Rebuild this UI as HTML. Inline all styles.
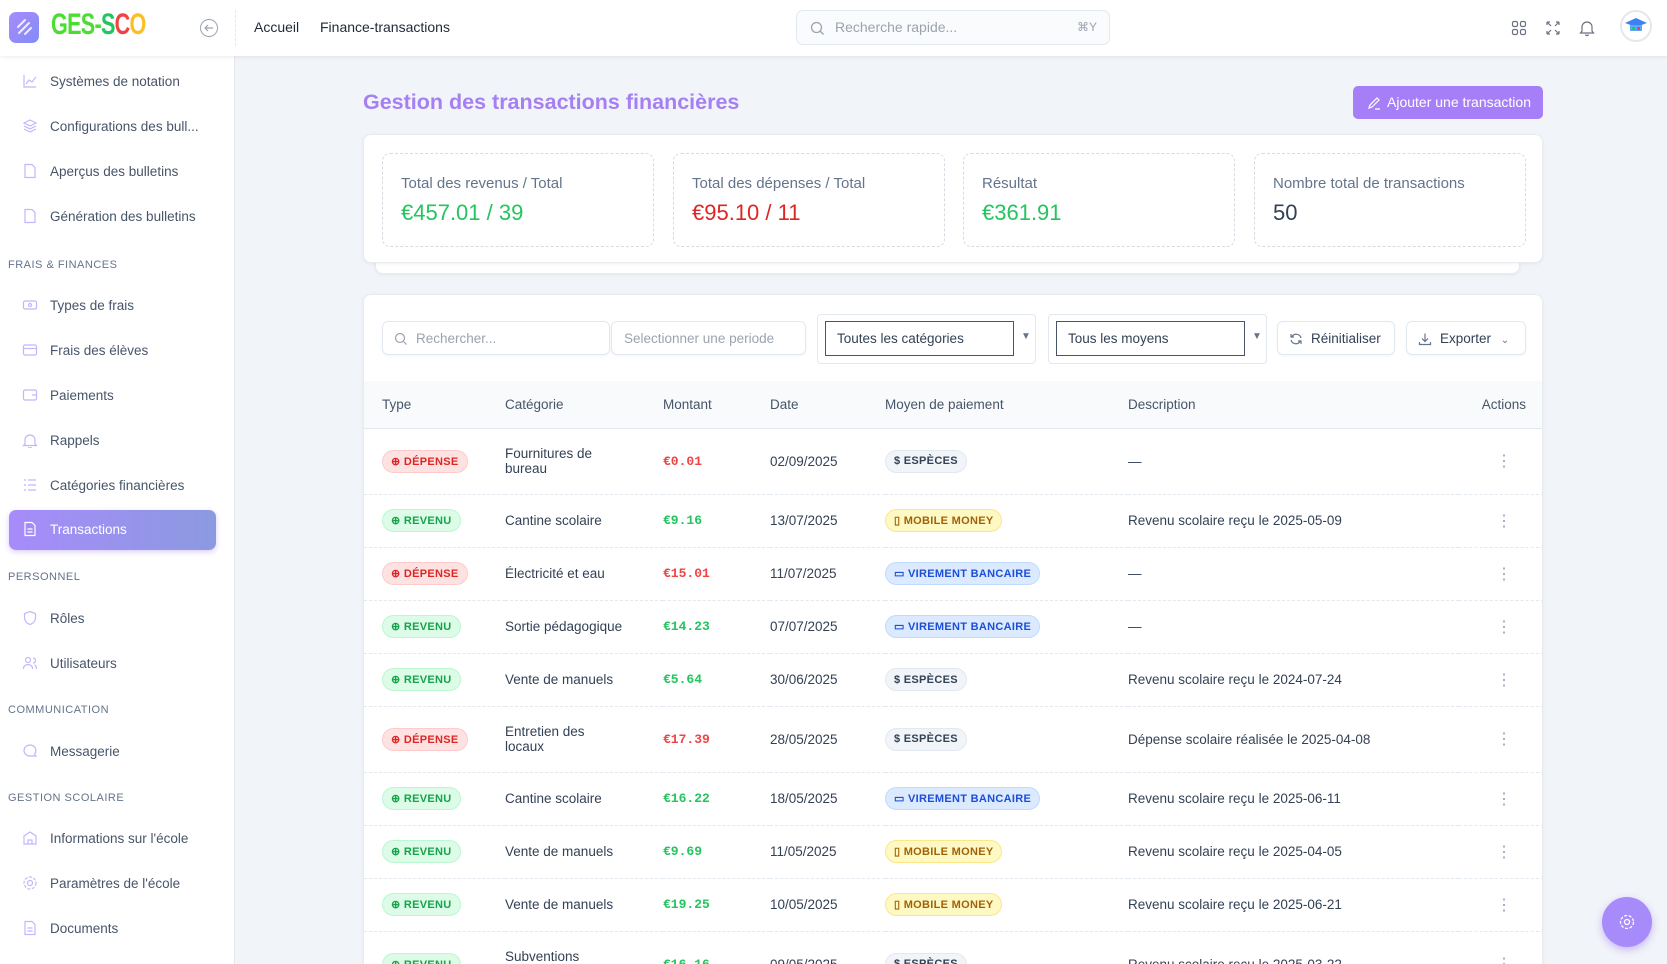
<!DOCTYPE html>
<html><head><meta charset="utf-8"><style>
*{box-sizing:border-box;margin:0;padding:0}
html{width:1667px;height:964px;overflow:hidden}
body{width:1667px;height:964px;overflow:hidden;background:#f1f4f8;font-family:"Liberation Sans",sans-serif;color:#334155;position:relative;font-size:14px}
.abs{position:absolute}
#hdr{left:0;top:0;width:1667px;height:56px;background:#fff;box-shadow:0 1px 4px rgba(0,0,0,.08);z-index:5}
#side{left:0;top:56px;width:235px;height:908px;background:#fff;border-right:1px solid #e5e7eb}
.it{position:absolute;left:0;width:235px;height:20px;font-size:13.5px;color:#475569}
.it svg{position:absolute;left:22px;top:1px}
.it span{position:absolute;left:50px;top:2px}
.sec{position:absolute;left:8px;font-size:11px;letter-spacing:.5px;color:#64748b}
.card{background:#fff;border-radius:8px;box-shadow:0 1px 3px rgba(0,0,0,.06);border:1px solid #e8ecf1}
.stat{position:absolute;top:18px;height:94px;width:272px;border:1px dashed #d6dbe3;border-radius:8px}
.stat .l{position:absolute;left:18px;top:21px;font-size:15px;color:#64748b}
.stat .v{position:absolute;left:18px;top:46px;font-size:22px}
.inp{position:absolute;height:34px;border:1px solid #e2e8f0;border-radius:6px;background:#fff;font-size:13.5px;color:#9ca3af;padding:9px 12px;box-shadow:0 1px 2px rgba(0,0,0,.04)}
table{border-collapse:collapse;position:absolute;left:0;top:86px;width:1180px}
th{height:47px;background:#f8fafc;text-align:left;font-weight:normal;color:#475569;font-size:13.5px;border-bottom:1px solid #e2e8f0}
td{font-size:13.5px;color:#334155;border-bottom:1px dashed #e2e8f0}
tr.s td{height:53px} tr.d td{height:66px}
.b{display:inline-flex;align-items:center;gap:4px;height:23px;padding:0 8px;border-radius:12px;font-size:11px;font-weight:bold;letter-spacing:.3px}
.dep{background:#fee2e2;color:#dc2626;border:1px solid #fecaca}
.rev{background:#dcfce7;color:#16a34a;border:1px solid #bbf7d0}
.esp{background:#f1f5f9;color:#334155;border:1px solid #e2e8f0}
.mob{background:#fef9c3;color:#a16207;border:1px solid #fde68a}
.vir{background:#dbeafe;color:#1d4ed8;border:1px solid #bfdbfe}
.mr{font-family:"Liberation Mono",monospace;font-weight:bold;font-size:13px;color:#ef4444}
.mg{font-family:"Liberation Mono",monospace;font-weight:bold;font-size:13px;color:#22c55e}
.dots{color:#94a3b8;text-align:right;padding-right:32px;font-size:16px}
</style></head><body>
<div id="hdr" class="abs">
 <div class="abs" style="left:9px;top:12px;width:30px;height:31px;border-radius:7px;background:linear-gradient(135deg,#a78bfa,#818cf8)">
  <svg width="30" height="31"><path d="M9 15l7-7M10 21l10-10M16 22l6-6" stroke="#fff" stroke-width="2" stroke-linecap="round" opacity=".85"/></svg></div>
 <div class="abs" style="left:51px;top:8px;font-size:30px;font-weight:bold;letter-spacing:-1px;transform:scaleX(.72);transform-origin:left;font-family:'Liberation Sans Narrow','Liberation Sans',sans-serif"><span style="color:#4ade30">GES-</span><span style="color:#22c55e">S</span><span style="color:#ef4444">C</span><span style="color:#fbbf24">O</span></div>
 <svg class="abs" style="left:199px;top:18px" width="20" height="20"><circle cx="10" cy="10" r="8.5" fill="none" stroke="#9ca3af"/><path d="M14 10H6M9 7l-3 3 3 3" fill="none" stroke="#9ca3af" stroke-width="1.2"/></svg>
 <div class="abs" style="left:235px;top:10px;height:36px;border-left:1px dashed #e5e7eb"></div>
 <div class="abs" style="left:254px;top:19px;font-size:14px;color:#1f2937">Accueil</div>
 <div class="abs" style="left:320px;top:19px;font-size:14px;color:#1f2937">Finance-transactions</div>
 <div class="abs" style="left:796px;top:10px;width:314px;height:35px;border:1px solid #e2e8f0;border-radius:7px;background:#fafbfc">
  <svg class="abs" style="left:13px;top:10px" width="15" height="15"><circle cx="6.5" cy="6.5" r="5" fill="none" stroke="#9ca3af" stroke-width="1.3"/><path d="M10 10l3.5 3.5" stroke="#9ca3af" stroke-width="1.3"/></svg>
  <span class="abs" style="left:38px;top:8px;color:#9ca3af;font-size:14px">Recherche rapide...</span>
  <span class="abs" style="right:12px;top:9px;color:#9ca3af;font-size:12px">⌘Y</span></div>
 <svg class="abs" style="left:1511px;top:20px" width="16" height="16" fill="none" stroke="#6b7280" stroke-width="1.2"><rect x="1.5" y="1.5" width="5" height="5" rx="1.5"/><rect x="9.5" y="1.5" width="5" height="5" rx="1.5"/><rect x="1.5" y="9.5" width="5" height="5" rx="1.5"/><rect x="9.5" y="9.5" width="5" height="5" rx="1.5"/></svg>
 <svg class="abs" style="left:1545px;top:20px" width="16" height="16" fill="none" stroke="#6b7280" stroke-width="1.2"><path d="M2 2l4 4M2 2h3M2 2v3M14 2l-4 4M14 2h-3M14 2v3M2 14l4-4M2 14h3M2 14v-3M14 14l-4-4M14 14h-3M14 14v-3"/></svg>
 <svg class="abs" style="left:1579px;top:19px" width="16" height="18" fill="none" stroke="#6b7280" stroke-width="1.2"><path d="M3 12V8a5 5 0 0110 0v4l1.5 2h-13zM6.5 15.5a1.6 1.6 0 003 0"/></svg>
 <div class="abs" style="left:1620px;top:10px;width:32px;height:32px;border-radius:50%;border:2px solid #e5e7eb;background:#fff">
  <svg width="28" height="28"><path d="M3 11l11-5 11 5-11 4z" fill="#3b82f6"/><rect x="8" y="13" width="12" height="6" fill="#60a5fa"/><rect x="10" y="15" width="3" height="3" fill="#22c55e"/><rect x="15" y="15" width="3" height="3" fill="#ef4444"/></svg></div>
</div>

<div id="side" class="abs">
 <div class="it" style="top:16px"><svg width="16" height="16" fill="none" stroke="#c4b5fd" stroke-width="1.2"><path d="M2 2v12h12M4 11l3-4 3 2 4-5"/></svg><span>Systèmes de notation</span></div>
 <div class="it" style="top:61px"><svg width="16" height="16" fill="none" stroke="#c4b5fd" stroke-width="1.2"><path d="M8 2l6 3-6 3-6-3zM2 8l6 3 6-3M2 11l6 3 6-3"/></svg><span>Configurations des bull...</span></div>
 <div class="it" style="top:106px"><svg width="16" height="16" fill="none" stroke="#c4b5fd" stroke-width="1.2"><path d="M3 1.5h7l3 3v10H3z"/></svg><span>Aperçus des bulletins</span></div>
 <div class="it" style="top:151px"><svg width="16" height="16" fill="none" stroke="#c4b5fd" stroke-width="1.2"><path d="M3 1.5h7l3 3v10H3z"/></svg><span>Génération des bulletins</span></div>
 <div class="sec" style="top:203px">FRAIS &amp; FINANCES</div>
 <div class="it" style="top:240px"><svg width="16" height="16" fill="none" stroke="#c4b5fd" stroke-width="1.2"><rect x="1.5" y="4" width="13" height="8" rx="1.5"/><circle cx="8" cy="8" r="1.5"/></svg><span>Types de frais</span></div>
 <div class="it" style="top:285px"><svg width="16" height="16" fill="none" stroke="#c4b5fd" stroke-width="1.2"><rect x="1.5" y="3" width="13" height="10" rx="1.5"/><path d="M1.5 6.5h13"/></svg><span>Frais des élèves</span></div>
 <div class="it" style="top:330px"><svg width="16" height="16" fill="none" stroke="#c4b5fd" stroke-width="1.2"><rect x="1.5" y="3" width="13" height="10" rx="1.5"/><path d="M10 8h4"/></svg><span>Paiements</span></div>
 <div class="it" style="top:375px"><svg width="16" height="16" fill="none" stroke="#c4b5fd" stroke-width="1.2"><path d="M3 12V8a5 5 0 0110 0v4l1.5 1.5h-13zM6.5 15a1.6 1.6 0 003 0"/></svg><span>Rappels</span></div>
 <div class="it" style="top:420px"><svg width="16" height="16" fill="none" stroke="#c4b5fd" stroke-width="1.2"><path d="M2 3h2M6 3h8M2 8h2M6 8h8M2 13h2M6 13h8"/></svg><span>Catégories financières</span></div>
 <div class="abs" style="left:9px;top:454px;width:207px;height:40px;border-radius:7px;background:linear-gradient(90deg,#a78bfa,#8b9ae0);box-shadow:0 2px 6px rgba(139,92,246,.3)"></div>
 <div class="it" style="top:464px;color:#fff"><svg width="16" height="16" fill="none" stroke="#fff" stroke-width="1.2"><path d="M3 1.5h7l3 3v10H3zM5.5 8h5M5.5 11h5"/></svg><span>Transactions</span></div>
 <div class="sec" style="top:515px">PERSONNEL</div>
 <div class="it" style="top:553px"><svg width="16" height="16" fill="none" stroke="#c4b5fd" stroke-width="1.2"><path d="M8 1.5l5.5 2v4c0 3.5-2.5 6-5.5 7-3-1-5.5-3.5-5.5-7v-4z"/></svg><span>Rôles</span></div>
 <div class="it" style="top:598px"><svg width="16" height="16" fill="none" stroke="#c4b5fd" stroke-width="1.2"><circle cx="6" cy="5" r="2.5"/><path d="M1.5 14c0-3 2-4.5 4.5-4.5s4.5 1.5 4.5 4.5M11 3a2.5 2.5 0 010 5M12.5 10c1.5.5 2 2 2 4"/></svg><span>Utilisateurs</span></div>
 <div class="sec" style="top:648px">COMMUNICATION</div>
 <div class="it" style="top:686px"><svg width="16" height="16" fill="none" stroke="#c4b5fd" stroke-width="1.2"><path d="M8 2a6 5.5 0 100 11H14l-1.5-2A6 5.5 0 008 2z"/></svg><span>Messagerie</span></div>
 <div class="sec" style="top:736px">GESTION SCOLAIRE</div>
 <div class="it" style="top:773px"><svg width="16" height="16" fill="none" stroke="#c4b5fd" stroke-width="1.2"><path d="M2 14V6l6-4 6 4v8zM6 14v-4h4v4"/></svg><span>Informations sur l'école</span></div>
 <div class="it" style="top:818px"><svg width="16" height="16" fill="none" stroke="#c4b5fd" stroke-width="1.2"><circle cx="8" cy="8" r="2.5"/><circle cx="8" cy="8" r="6" stroke-dasharray="3 1.5"/></svg><span>Paramètres de l'école</span></div>
 <div class="it" style="top:863px"><svg width="16" height="16" fill="none" stroke="#c4b5fd" stroke-width="1.2"><path d="M3 1.5h7l3 3v10H3zM5.5 8h5M5.5 11h5"/></svg><span>Documents</span></div>
</div>

<div class="abs" style="left:363px;top:90px;font-size:21.5px;font-weight:bold;color:#a67ff2">Gestion des transactions financières</div>
<div class="abs" style="left:1353px;top:86px;width:190px;height:33px;border-radius:5px;background:#a67ff8;color:#fff;font-size:14px">
 <svg class="abs" style="left:14px;top:10px" width="14" height="14" fill="none" stroke="#fff" stroke-width="1.2"><path d="M2 12l1-3 7-7 2 2-7 7zM8 13h5"/></svg>
 <span class="abs" style="left:34px;top:8px">Ajouter une transaction</span></div>

<div class="abs card" style="left:375px;top:250px;width:1145px;height:24px"></div>
<div class="abs card" style="left:363px;top:134px;width:1180px;height:129px">
 <div class="stat" style="left:18px"><div class="l">Total des revenus / Total</div><div class="v" style="color:#22c55e">€457.01 / 39</div></div>
 <div class="stat" style="left:309px"><div class="l">Total des dépenses / Total</div><div class="v" style="color:#dc2626">€95.10 / 11</div></div>
 <div class="stat" style="left:599px"><div class="l">Résultat</div><div class="v" style="color:#22c55e">€361.91</div></div>
 <div class="stat" style="left:890px"><div class="l">Nombre total de transactions</div><div class="v" style="color:#334155">50</div></div>
</div>

<div class="abs card" style="left:363px;top:294px;width:1180px;height:680px;overflow:hidden;border-radius:8px">
 <div class="inp" style="left:18px;top:26px;width:228px;padding-left:33px"><svg class="abs" style="left:11px;top:10px" width="14" height="14"><circle cx="6" cy="6" r="4.5" fill="none" stroke="#9ca3af" stroke-width="1.2"/><path d="M9.5 9.5l3 3" stroke="#9ca3af" stroke-width="1.2"/></svg>Rechercher...</div>
 <div class="inp" style="left:247px;top:26px;width:195px">Selectionner une periode</div>
 <div class="abs" style="left:453px;top:19px;width:219px;height:50px;border:1px solid #e2e8f0;border-radius:4px"></div>
 <div class="abs" style="left:461px;top:26px;width:189px;height:35px;border:1px solid #475569;font-size:13.5px;color:#334155;padding:9px 11px">Toutes les catégories</div>
 <div class="abs" style="left:657px;top:36px;font-size:10px;color:#64748b">▼</div>
 <div class="abs" style="left:684px;top:19px;width:219px;height:50px;border:1px solid #e2e8f0;border-radius:4px"></div>
 <div class="abs" style="left:692px;top:26px;width:189px;height:35px;border:1px solid #475569;font-size:13.5px;color:#334155;padding:9px 11px">Tous les moyens</div>
 <div class="abs" style="left:888px;top:36px;font-size:10px;color:#64748b">▼</div>
 <div class="inp" style="left:913px;top:26px;width:118px;color:#334155;padding-left:33px"><svg class="abs" style="left:11px;top:10px" width="14" height="14" fill="none" stroke="#64748b" stroke-width="1.2"><path d="M12 6a5 5 0 00-9-1.5M2 2v3h3M2 8a5 5 0 009 1.5M12 12V9H9"/></svg>Réinitialiser</div>
 <div class="inp" style="left:1042px;top:26px;width:120px;color:#334155;padding-left:33px"><svg class="abs" style="left:11px;top:10px" width="14" height="14" fill="none" stroke="#64748b" stroke-width="1.2"><path d="M7 1.5v8M4 6.5l3 3 3-3M1.5 10v2.5h11V10"/></svg>Exporter <span style="color:#64748b;font-size:10px;margin-left:6px">⌄</span></div>
 <table>
  <tr><th style="padding-left:18px;width:141px">Type</th><th style="width:158px">Catégorie</th><th style="width:107px">Montant</th><th style="width:115px">Date</th><th style="width:243px">Moyen de paiement</th><th>Description</th><th style="text-align:right;padding-right:18px">Actions</th></tr>
  <tr class="d"><td style="padding-left:18px"><span class="b dep">⊕ DÉPENSE</span></td><td>Fournitures de<br>bureau</td><td class="mr">€0.01</td><td>02/09/2025</td><td><span class="b esp">$ ESPÈCES</span></td><td>—</td><td class="dots">⋮</td></tr>
  <tr class="s"><td style="padding-left:18px"><span class="b rev">⊕ REVENU</span></td><td>Cantine scolaire</td><td class="mg">€9.16</td><td>13/07/2025</td><td><span class="b mob">▯ MOBILE MONEY</span></td><td>Revenu scolaire reçu le 2025-05-09</td><td class="dots">⋮</td></tr>
  <tr class="s"><td style="padding-left:18px"><span class="b dep">⊕ DÉPENSE</span></td><td>Électricité et eau</td><td class="mr">€15.01</td><td>11/07/2025</td><td><span class="b vir">▭ VIREMENT BANCAIRE</span></td><td>—</td><td class="dots">⋮</td></tr>
  <tr class="s"><td style="padding-left:18px"><span class="b rev">⊕ REVENU</span></td><td>Sortie pédagogique</td><td class="mg">€14.23</td><td>07/07/2025</td><td><span class="b vir">▭ VIREMENT BANCAIRE</span></td><td>—</td><td class="dots">⋮</td></tr>
  <tr class="s"><td style="padding-left:18px"><span class="b rev">⊕ REVENU</span></td><td>Vente de manuels</td><td class="mg">€5.64</td><td>30/06/2025</td><td><span class="b esp">$ ESPÈCES</span></td><td>Revenu scolaire reçu le 2024-07-24</td><td class="dots">⋮</td></tr>
  <tr class="d"><td style="padding-left:18px"><span class="b dep">⊕ DÉPENSE</span></td><td>Entretien des<br>locaux</td><td class="mr">€17.39</td><td>28/05/2025</td><td><span class="b esp">$ ESPÈCES</span></td><td>Dépense scolaire réalisée le 2025-04-08</td><td class="dots">⋮</td></tr>
  <tr class="s"><td style="padding-left:18px"><span class="b rev">⊕ REVENU</span></td><td>Cantine scolaire</td><td class="mg">€16.22</td><td>18/05/2025</td><td><span class="b vir">▭ VIREMENT BANCAIRE</span></td><td>Revenu scolaire reçu le 2025-06-11</td><td class="dots">⋮</td></tr>
  <tr class="s"><td style="padding-left:18px"><span class="b rev">⊕ REVENU</span></td><td>Vente de manuels</td><td class="mg">€9.69</td><td>11/05/2025</td><td><span class="b mob">▯ MOBILE MONEY</span></td><td>Revenu scolaire reçu le 2025-04-05</td><td class="dots">⋮</td></tr>
  <tr class="s"><td style="padding-left:18px"><span class="b rev">⊕ REVENU</span></td><td>Vente de manuels</td><td class="mg">€19.25</td><td>10/05/2025</td><td><span class="b mob">▯ MOBILE MONEY</span></td><td>Revenu scolaire reçu le 2025-06-21</td><td class="dots">⋮</td></tr>
  <tr class="d"><td style="padding-left:18px"><span class="b rev">⊕ REVENU</span></td><td>Subventions<br>publiques</td><td class="mg">€16.16</td><td>09/05/2025</td><td><span class="b esp">$ ESPÈCES</span></td><td>Revenu scolaire reçu le 2025-03-22</td><td class="dots">⋮</td></tr>
 </table>
</div>
<div class="abs" style="left:1602px;top:897px;width:50px;height:50px;border-radius:50%;background:#a78bfa;box-shadow:0 3px 8px rgba(139,92,246,.4)">
 <svg class="abs" style="left:16px;top:16px" width="18" height="18" fill="none" stroke="#fff" stroke-width="1.3"><circle cx="9" cy="9" r="2.5"/><circle cx="9" cy="9" r="6.5" stroke-dasharray="3 1.6"/></svg></div>
</body></html>
